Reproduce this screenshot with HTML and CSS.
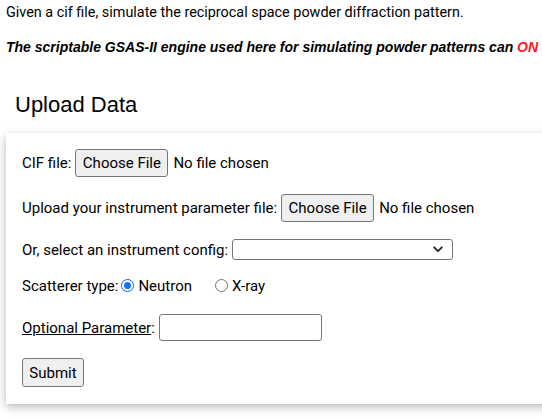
FILE: index.html
```html
<!DOCTYPE html>
<html>
<head>
<meta charset="utf-8">
<link rel="stylesheet" href="styles.css">
</head>
<body>
<div class="page">
  <p class="intro">Given a cif file, simulate the reciprocal space powder diffraction pattern.</p>
  <p class="warn">The scriptable GSAS-II engine used here for simulating powder patterns can <span class="red">ON</span></p>
  <h2 class="title">Upload Data</h2>
  <form class="panel">
    <div class="row">
      <span class="label">CIF file:</span>
      <button type="button" class="btn file-btn">Choose File</button>
      <span class="none">No file chosen</span>
    </div>
    <div class="row">
      <span class="label">Upload your instrument parameter file:</span>
      <button type="button" class="btn file-btn">Choose File</button>
      <span class="none">No file chosen</span>
    </div>
    <div class="row">
      <span class="label">Or, select an instrument config:</span>
      <span class="select">
        <svg class="chev" width="10" height="7" viewBox="0 0 10 7"><path d="M1.2 1.3 L5 5.1 L8.8 1.3" fill="none" stroke="#222" stroke-width="1.8" stroke-linecap="round" stroke-linejoin="round"/></svg>
      </span>
    </div>
    <div class="row radios">
      <span class="label">Scatterer type:</span>
      <span class="radio checked"></span><span class="rlabel neutron">Neutron</span>
      <span class="radio"></span><span class="rlabel">X-ray</span>
    </div>
    <div class="row opt">
      <span class="label"><span class="u">Optional Parameter</span>:</span>
      <span class="text-input"></span>
    </div>
    <div class="row sub">
      <button type="button" class="btn submit">Submit</button>
    </div>
  </form>
</div>
</body>
</html>
```
FILE: styles.css
```css
html, body {
  margin: 0;
  padding: 0;
  background: #fff;
}
.page {
  width: 542px;
  height: 418px;
  overflow: hidden;
  font-family: Roboto, "Liberation Sans", sans-serif;
  color: #000;
  padding: 0 0 0 6px;
  box-sizing: border-box;
}
.intro {
  margin: 0;
  padding-top: 4px;
  font-size: 14.4px;
  line-height: 17px;
  white-space: nowrap;
}
.warn {
  margin: 18px 0 0 0;
  font-family: "Liberation Sans", Arial, sans-serif;
  font-size: 14px;
  line-height: 17px;
  font-weight: bold;
  font-style: italic;
  white-space: nowrap;
}
.red { color: #ff1a1a; }
.title {
  margin: 36px 0 0 9px;
  font-family: "Liberation Sans", Arial, sans-serif;
  font-weight: normal;
  font-size: 22px;
  line-height: 26px;
}
.panel {
  margin-top: 15px;
  width: 600px;
  background: #fff;
  box-shadow: 0 3px 9px rgba(0,0,0,0.28);
  padding: 16px 16px 17px 16px;
  box-sizing: border-box;
  display: flex;
  flex-direction: column;
  gap: 17px;
  font-family: Roboto, "Liberation Sans", sans-serif;
  font-size: 15px;
}
.row {
  display: flex;
  align-items: center;
  min-height: 21px;
  white-space: nowrap;
}
.label { margin-right: 4px; }
.btn {
  font-family: Roboto, "Liberation Sans", sans-serif;
  font-size: 15px;
  color: #000;
  background: #efefef;
  border: 1px solid #767676;
  border-radius: 3px;
  height: 28px;
  padding: 0;
  margin: 0;
}
.file-btn { width: 93px; }
.none { margin-left: 5px; }
.select {
  width: 221px;
  height: 21px;
  border: 1px solid #767676;
  border-radius: 3px;
  box-sizing: border-box;
  display: flex;
  align-items: center;
  justify-content: flex-end;
  padding-right: 9px;
  background: #fff;
}
.radios { height: 17px; min-height: 17px; }
.radio {
  width: 11px;
  height: 11px;
  border: 1px solid #767676;
  border-radius: 50%;
  box-sizing: content-box;
  margin: 0 4px 0 0;
  position: relative;
}
.radio.checked {
  border-color: #0a60f0;
  background: #fff;
}
.radio.checked::after {
  content: "";
  position: absolute;
  left: 2px;
  top: 2px;
  width: 7px;
  height: 7px;
  border-radius: 50%;
  background: #1a73f0;
}
.rlabel.neutron { margin-right: 23px; }
.radios .label { margin-right: 3px; }
.u { text-decoration: underline; }
.opt { margin-top: 3px; }
.sub { margin-top: 0; }
.text-input {
  width: 163px;
  height: 27px;
  border: 1px solid #767676;
  border-radius: 3px;
  box-sizing: border-box;
  background: #fff;
}
.submit { width: 62px; height: 29px; }
```
